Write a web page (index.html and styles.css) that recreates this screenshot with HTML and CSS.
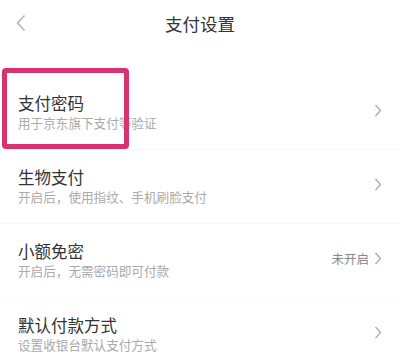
FILE: index.html
```html
<!DOCTYPE html>
<html lang="zh">
<head>
<meta charset="utf-8">
<link rel="stylesheet" href="styles.css">
</head>
<body>
<div class="page">
  <header class="header">
    <svg class="back" width="10" height="18" viewBox="0 0 10 18"><path d="M8.5 1.5 L1.5 9 L8.5 16.5" fill="none" stroke="#b5b5b5" stroke-width="1.6"/></svg>
    <h1 class="title">支付设置</h1>
  </header>
  <ul class="list">
    <li class="row">
      <div class="text">
        <div class="name">支付密码</div>
        <div class="desc">用于京东旗下支付等验证</div>
      </div>
      <div class="right"><svg class="chev" width="8" height="13" viewBox="0 0 8 13"><path d="M1.5 1 L6.5 6.5 L1.5 12" fill="none" stroke="#aaa" stroke-width="1.3"/></svg></div>
    </li>
    <li class="row">
      <div class="text">
        <div class="name">生物支付</div>
        <div class="desc">开启后，使用指纹、手机刷脸支付</div>
      </div>
      <div class="right"><svg class="chev" width="8" height="13" viewBox="0 0 8 13"><path d="M1.5 1 L6.5 6.5 L1.5 12" fill="none" stroke="#aaa" stroke-width="1.3"/></svg></div>
    </li>
    <li class="row">
      <div class="text">
        <div class="name">小额免密</div>
        <div class="desc">开启后，无需密码即可付款</div>
      </div>
      <div class="right"><span class="status">未开启</span><svg class="chev" width="8" height="13" viewBox="0 0 8 13"><path d="M1.5 1 L6.5 6.5 L1.5 12" fill="none" stroke="#aaa" stroke-width="1.3"/></svg></div>
    </li>
    <li class="row">
      <div class="text">
        <div class="name">默认付款方式</div>
        <div class="desc">设置收银台默认支付方式</div>
      </div>
      <div class="right"><svg class="chev" width="8" height="13" viewBox="0 0 8 13"><path d="M1.5 1 L6.5 6.5 L1.5 12" fill="none" stroke="#aaa" stroke-width="1.3"/></svg></div>
    </li>
  </ul>
  <div class="highlight"></div>
</div>
</body>
</html>
```

FILE: styles.css
```css
* { box-sizing: border-box; }
html, body {
  margin: 0;
  padding: 0;
  background: #fff;
  font-family: "Noto Sans CJK SC", "Noto Sans", sans-serif;
  overflow: hidden;
}
.page {
  position: relative;
  width: 400px;
  height: 359px;
}
.header {
  position: relative;
  height: 48px;
  display: flex;
  align-items: center;
  justify-content: center;
}
.back {
  position: absolute;
  left: 16px;
  top: 14px;
}
.title {
  margin: 0;
  font-size: 17.5px;
  font-weight: 400;
  color: #333;
  line-height: 1;
}
.list {
  list-style: none;
  margin: 0;
  padding: 28px 0 0 0;
}
.row {
  height: 74px;
  display: flex;
  align-items: center;
  justify-content: space-between;
  padding: 0 18px;
  border-bottom: 1px solid #f8f8f8;
}
.text {
  display: flex;
  flex-direction: column;
  gap: 4px;
}
.name {
  font-size: 16.5px;
  color: #333;
  line-height: 17px;
}
.desc {
  font-size: 12.6px;
  color: #aaa;
  line-height: 14px;
}
.right {
  display: flex;
  align-items: center;
  gap: 5px;
  margin-top: -4px;
  margin-right: 0;
}
.status {
  font-size: 12.5px;
  color: #888;
}
.chev { display: block; }
.highlight {
  position: absolute;
  left: 2px;
  top: 68px;
  width: 127px;
  height: 81px;
  border: 5px solid #d8336f;
  border-radius: 4px;
}
```
